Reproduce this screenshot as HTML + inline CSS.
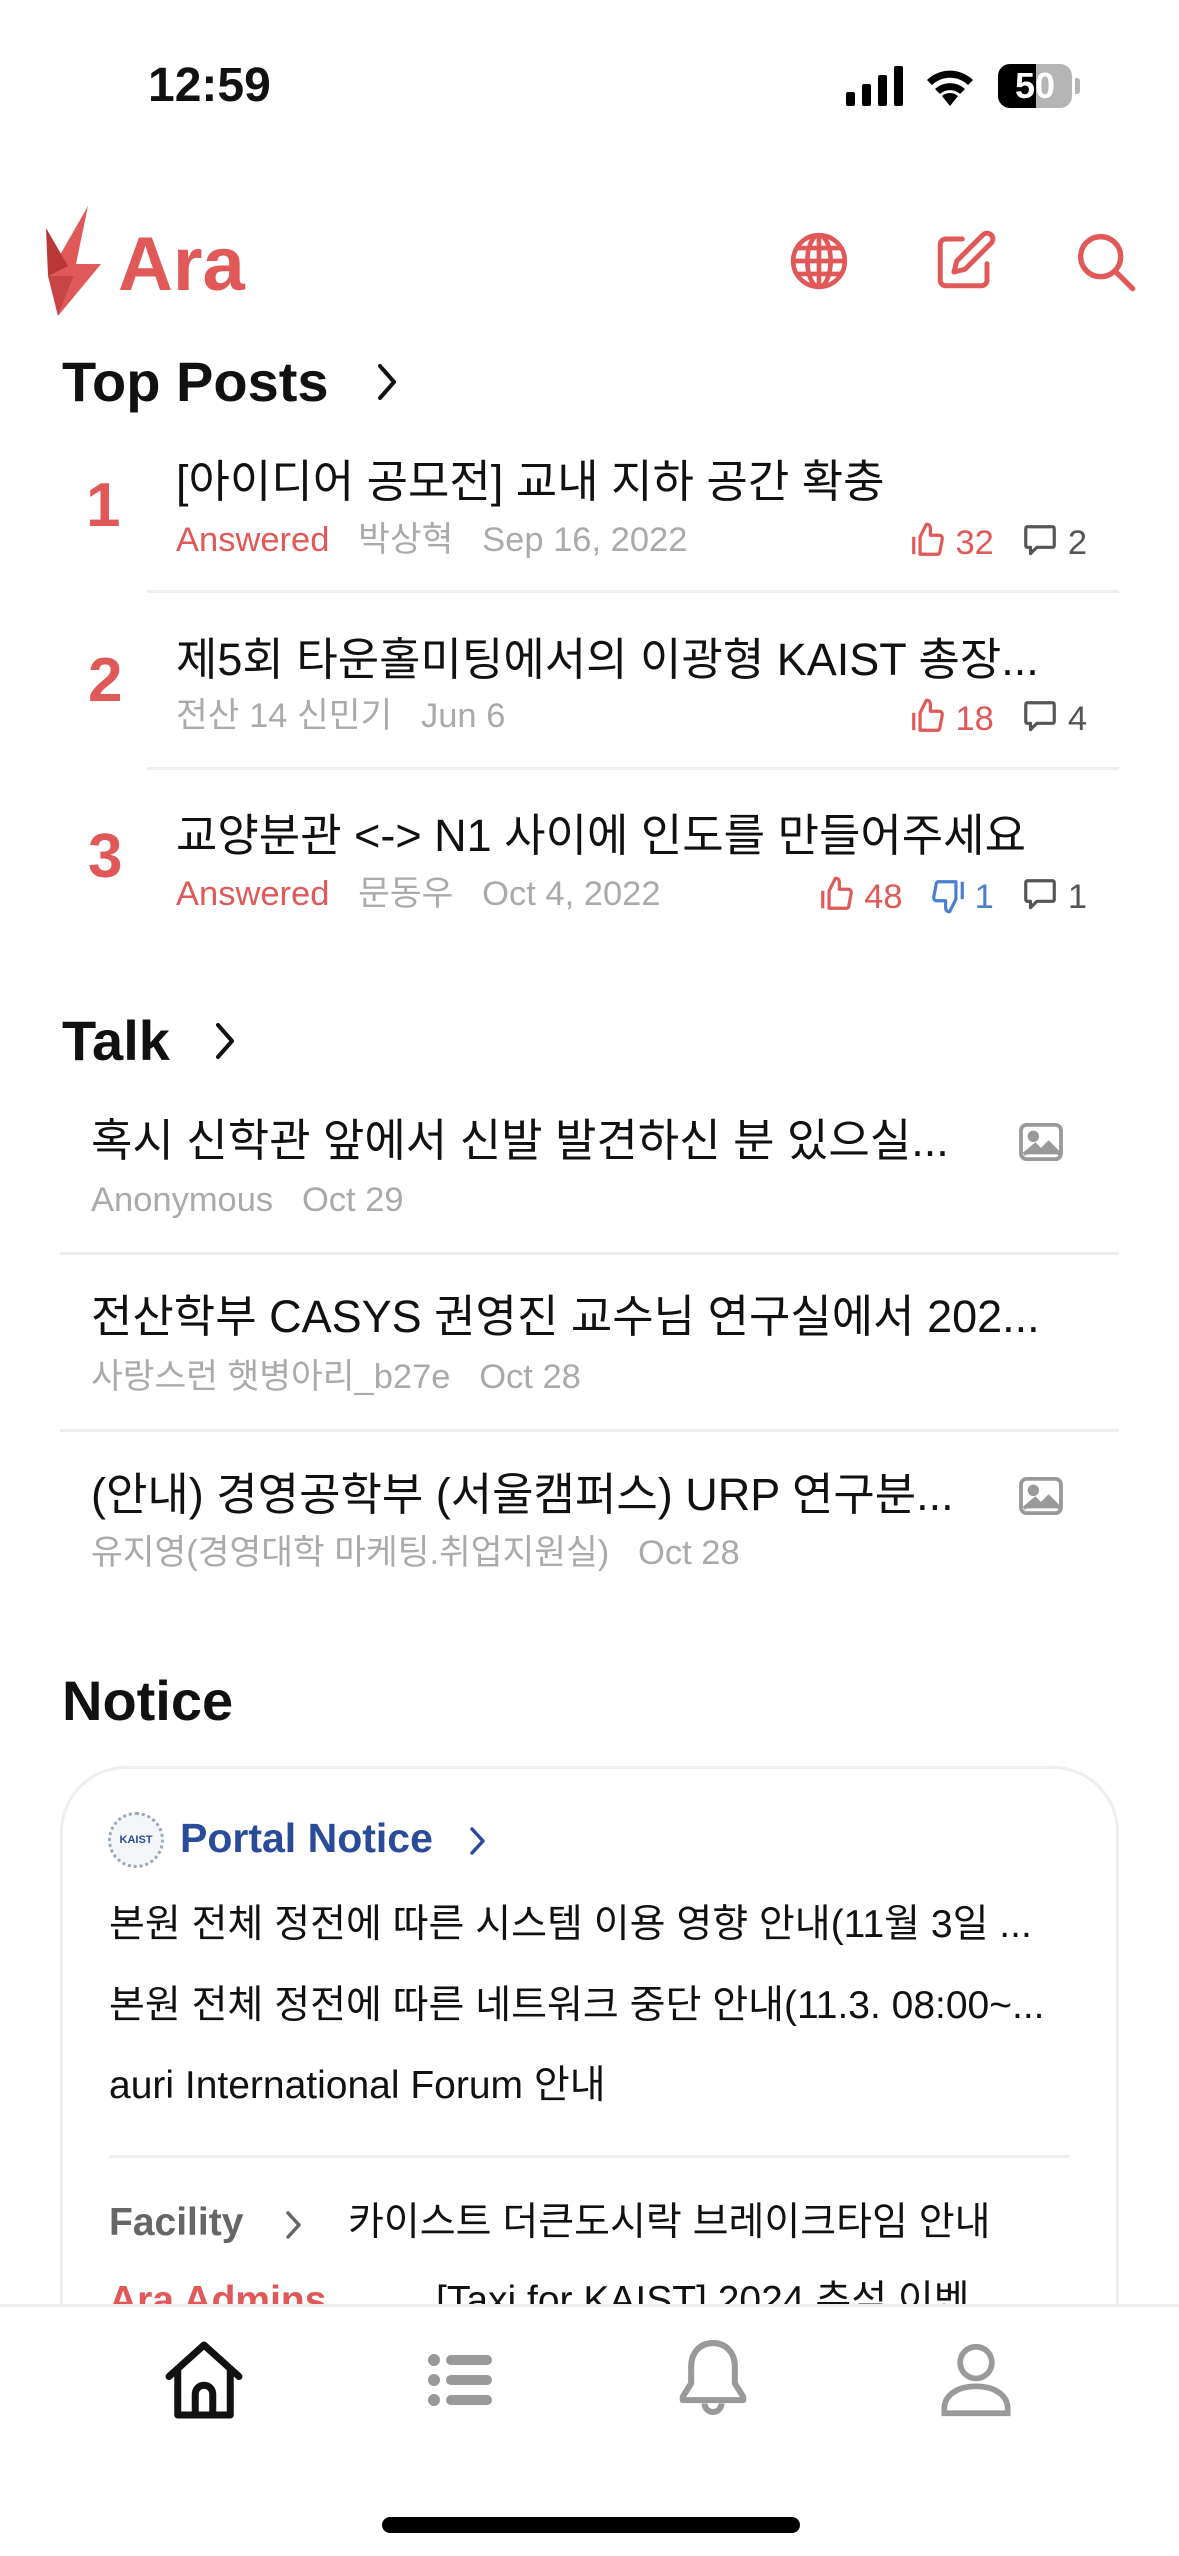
<!DOCTYPE html>
<html><head><meta charset="utf-8"><style>
*{margin:0;padding:0;box-sizing:border-box}
body{width:1179px;height:2556px;background:#fff;position:relative;overflow:hidden;font-family:"Liberation Sans","Noto Sans CJK KR",sans-serif;color:#111}
.a{position:absolute;white-space:nowrap}
.t{font-size:45px;line-height:52px;color:#111}
.m{font-size:34.5px;line-height:40px;color:#aaa}
.r{color:#e15858}
.rank{font-size:62px;font-weight:bold;color:#e15858;line-height:70px}
.h{font-size:56px;font-weight:bold;line-height:64px;color:#111}
.hr{position:absolute;height:3px;background:#eee}
.n{font-size:39px;line-height:46px;color:#111}
svg{position:absolute}
.ic{position:static!important;margin-right:8px}
.g{display:inline-block;width:26px}
</style></head><body>
<!-- status bar -->
<div class="a" style="left:148px;top:58px;font-size:48px;font-weight:bold;line-height:56px">12:59</div>
<svg style="left:846px;top:66px" width="58" height="40"><rect x="0" y="26" width="9" height="14" rx="2"/><rect x="16" y="18" width="9" height="22" rx="2"/><rect x="32" y="9" width="9" height="31" rx="2"/><rect x="48" y="0" width="9" height="40" rx="2"/></svg>
<svg style="left:924px;top:66px" width="52" height="40" viewBox="0 0 52 40"><path d="M26 40 L18 30 A12 12 0 0 1 34 30Z"/><path d="M11 23 A22 22 0 0 1 41 23 L36 28 A15 15 0 0 0 16 28Z"/><path d="M3 14 A33 33 0 0 1 49 14 L44 19 A26 26 0 0 0 8 19Z"/></svg>
<div class="a" style="left:998px;top:64px;width:74px;height:44px;border-radius:12px;background:#b5b5b5;overflow:hidden"><div style="width:38px;height:44px;background:#000"></div></div>
<div class="a" style="left:998px;top:64px;width:74px;height:44px;font-size:36px;font-weight:bold;color:#fff;text-align:center;line-height:44px">50</div>
<div class="a" style="left:1075px;top:78px;width:5px;height:16px;background:#b5b5b5;border-radius:0 3px 3px 0"></div>
<!-- header -->
<svg style="left:46px;top:206px" width="60" height="110" viewBox="0 0 60 110"><path d="M42 0 L30 58 L55 58 L12 110 L28 70 L2 70 Z" fill="#e15858"/><path d="M0 22 L22 60 L2 70 Z" fill="#b83838"/><path d="M2 70 L28 70 L12 110Z" fill="#c94444"/></svg>
<div class="a" style="left:118px;top:222px;font-size:76px;font-weight:bold;color:#e15858;line-height:86px;letter-spacing:0px">Ara</div>
<svg style="left:788px;top:230px" width="62" height="62" viewBox="0 0 24 24" fill="none" stroke="#e15858" stroke-width="1.8"><circle cx="12" cy="12" r="10"/><ellipse cx="12" cy="12" rx="4.5" ry="10"/><path d="M2 12h20M3.5 7h17M3.5 17h17M12 2v20"/></svg>
<svg style="left:932px;top:228px" width="66" height="66" viewBox="0 0 24 24" fill="none" stroke="#e15858" stroke-width="1.8" stroke-linejoin="round" stroke-linecap="round"><path d="M11 4H5a2 2 0 0 0-2 2v13a2 2 0 0 0 2 2h13a2 2 0 0 0 2-2v-6"/><path d="M18.5 2.5a2.1 2.1 0 0 1 3 3L12 15l-4 1 1-4z"/></svg>
<svg style="left:1074px;top:230px" width="64" height="64" viewBox="0 0 24 24" fill="none" stroke="#e15858" stroke-width="2" stroke-linecap="round"><circle cx="10" cy="10" r="7.5"/><path d="M15.5 15.5L22 22"/></svg>
<!-- top posts -->
<div class="a h" style="left:62px;top:350px">Top Posts</div>
<svg style="left:372px;top:360px" width="30" height="44" viewBox="0 0 30 44" fill="none" stroke="#111" stroke-width="4" stroke-linecap="round" stroke-linejoin="round"><path d="M8 6l14 16-14 16"/></svg>

<div class="a rank" style="left:86px;top:471px">1</div>
<div class="a t" style="left:176px;top:456px">[아이디어 공모전] 교내 지하 공간 확충</div>
<div class="a m" style="left:176px;top:520px"><span class="r">Answered</span>&nbsp;&nbsp; 박상혁 &nbsp; Sep 16, 2022</div>
<div class="hr" style="left:147px;top:590px;width:972px"></div>

<div class="a rank" style="left:88px;top:646px">2</div>
<div class="a t" style="left:176px;top:634px">제5회 타운홀미팅에서의 이광형 KAIST 총장...</div>
<div class="a m" style="left:176px;top:696px">전산 14 신민기 &nbsp; Jun 6</div>
<div class="hr" style="left:147px;top:767px;width:972px"></div>

<div class="a rank" style="left:88px;top:822px">3</div>
<div class="a t" style="left:176px;top:810px">교양분관 &lt;-&gt; N1 사이에 인도를 만들어주세요</div>
<div class="a m" style="left:176px;top:874px"><span class="r">Answered</span>&nbsp;&nbsp; 문동우 &nbsp; Oct 4, 2022</div>

<!-- like/comment stats -->
<div class="a m" style="right:92px;top:520px;color:#e15858">
<svg class="ic" style="vertical-align:-6px" width="38" height="40" viewBox="0 0 24 24" fill="none" stroke="#e15858" stroke-width="2" stroke-linejoin="round"><path d="M3 10v11M7 10l4-8c1.5 0 2.5 1 2.5 2.5V9h5.5a2 2 0 0 1 2 2.3l-1.5 8A2 2 0 0 1 18.5 21H7z"/></svg>32<span class="g"></span><span style="color:#555"><svg class="ic" style="vertical-align:-6px" width="40" height="38" viewBox="0 0 24 24" fill="none" stroke="#555" stroke-width="2" stroke-linejoin="round"><path d="M4 3h16a1 1 0 0 1 1 1v11a1 1 0 0 1-1 1H10l-4 4v-4H4a1 1 0 0 1-1-1V4a1 1 0 0 1 1-1z"/></svg>2</span></div>
<div class="a m" style="right:92px;top:696px;color:#e15858">
<svg class="ic" style="vertical-align:-6px" width="38" height="40" viewBox="0 0 24 24" fill="none" stroke="#e15858" stroke-width="2" stroke-linejoin="round"><path d="M3 10v11M7 10l4-8c1.5 0 2.5 1 2.5 2.5V9h5.5a2 2 0 0 1 2 2.3l-1.5 8A2 2 0 0 1 18.5 21H7z"/></svg>18<span class="g"></span><span style="color:#555"><svg class="ic" style="vertical-align:-6px" width="40" height="38" viewBox="0 0 24 24" fill="none" stroke="#555" stroke-width="2" stroke-linejoin="round"><path d="M4 3h16a1 1 0 0 1 1 1v11a1 1 0 0 1-1 1H10l-4 4v-4H4a1 1 0 0 1-1-1V4a1 1 0 0 1 1-1z"/></svg>4</span></div>
<div class="a m" style="right:92px;top:874px;color:#e15858">
<svg class="ic" style="vertical-align:-6px" width="38" height="40" viewBox="0 0 24 24" fill="none" stroke="#e15858" stroke-width="2" stroke-linejoin="round"><path d="M3 10v11M7 10l4-8c1.5 0 2.5 1 2.5 2.5V9h5.5a2 2 0 0 1 2 2.3l-1.5 8A2 2 0 0 1 18.5 21H7z"/></svg>48<span class="g"></span><span style="color:#4a7fd0"><svg class="ic" style="vertical-align:-8px" width="38" height="40" viewBox="0 0 24 24" fill="none" stroke="#4a7fd0" stroke-width="2" stroke-linejoin="round"><path d="M21 14V3M17 14l-4 8c-1.5 0-2.5-1-2.5-2.5V15H5a2 2 0 0 1-2-2.3l1.5-8A2 2 0 0 1 5.5 3H17z"/></svg>1</span><span class="g"></span><span style="color:#555"><svg class="ic" style="vertical-align:-6px" width="40" height="38" viewBox="0 0 24 24" fill="none" stroke="#555" stroke-width="2" stroke-linejoin="round"><path d="M4 3h16a1 1 0 0 1 1 1v11a1 1 0 0 1-1 1H10l-4 4v-4H4a1 1 0 0 1-1-1V4a1 1 0 0 1 1-1z"/></svg>1</span></div>

<!-- talk -->
<div class="a h" style="left:62px;top:1009px">Talk</div>
<svg style="left:210px;top:1019px" width="30" height="44" viewBox="0 0 30 44" fill="none" stroke="#111" stroke-width="4" stroke-linecap="round" stroke-linejoin="round"><path d="M8 6l14 16-14 16"/></svg>

<div class="a t" style="left:91px;top:1115px">혹시 신학관 앞에서 신발 발견하신 분 있으실...</div>
<div class="a m" style="left:91px;top:1180px">Anonymous &nbsp; Oct 29</div>
<div class="hr" style="left:60px;top:1252px;width:1059px"></div>
<div class="a t" style="left:91px;top:1291px">전산학부 CASYS 권영진 교수님 연구실에서 202...</div>
<div class="a m" style="left:91px;top:1357px">사랑스런 햇병아리_b27e &nbsp; Oct 28</div>
<div class="hr" style="left:60px;top:1429px;width:1059px"></div>
<div class="a t" style="left:91px;top:1469px">(안내) 경영공학부 (서울캠퍼스) URP 연구분...</div>
<div class="a m" style="left:91px;top:1533px">유지영(경영대학 마케팅.취업지원실) &nbsp; Oct 28</div>
<svg style="left:1018px;top:1122px" width="46" height="40" viewBox="0 0 24 21" fill="none" stroke="#999" stroke-width="2"><rect x="1.5" y="1.5" width="21" height="18" rx="3"/><circle cx="8" cy="7.5" r="2" fill="#999"/><path d="M3 17l6-5 3 3 4-4 6 6" fill="#999"/></svg>
<svg style="left:1018px;top:1476px" width="46" height="40" viewBox="0 0 24 21" fill="none" stroke="#999" stroke-width="2"><rect x="1.5" y="1.5" width="21" height="18" rx="3"/><circle cx="8" cy="7.5" r="2" fill="#999"/><path d="M3 17l6-5 3 3 4-4 6 6" fill="#999"/></svg>

<!-- notice -->
<div class="a h" style="left:62px;top:1669px">Notice</div>
<div class="a" style="left:60px;top:1766px;width:1059px;height:700px;border:3px solid #eee;border-radius:66px"></div>
<div class="a" style="left:108px;top:1812px;width:56px;height:56px;border-radius:50%;border:3px dotted #9ab;background:#f4f6fa;font-size:11px;color:#2a4a9a;text-align:center;line-height:50px;font-weight:bold">KAIST</div>
<div class="a" style="left:180px;top:1813px;font-size:41px;font-weight:bold;color:#2a4a9a;line-height:50px">Portal Notice</div>
<svg style="left:466px;top:1824px" width="24" height="34" viewBox="0 0 24 34" fill="none" stroke="#2a4a9a" stroke-width="3.5" stroke-linecap="round" stroke-linejoin="round"><path d="M6 5l11 12-11 12"/></svg>
<div class="a n" style="left:109px;top:1902px">본원 전체 정전에 따른 시스템 이용 영향 안내(11월 3일 ...</div>
<div class="a n" style="left:109px;top:1983px">본원 전체 정전에 따른 네트워크 중단 안내(11.3. 08:00~...</div>
<div class="a n" style="left:109px;top:2063px">auri International Forum 안내</div>
<div class="hr" style="left:109px;top:2155px;width:961px"></div>
<div class="a" style="left:109px;top:2200px;font-size:39px;font-weight:bold;color:#666;line-height:46px">Facility</div>
<svg style="left:282px;top:2208px" width="24" height="34" viewBox="0 0 24 34" fill="none" stroke="#666" stroke-width="3.5" stroke-linecap="round" stroke-linejoin="round"><path d="M6 5l11 12-11 12"/></svg>
<div class="a n" style="left:348px;top:2200px">카이스트 더큰도시락 브레이크타임 안내</div>
<div class="a" style="left:109px;top:2278px;font-size:39px;font-weight:bold;color:#e15858;line-height:46px">Ara Admins</div>
<div class="a n" style="left:436px;top:2278px">[Taxi for KAIST] 2024 추석 이벤</div>

<!-- tab bar -->
<div class="a" style="left:0;top:2304px;width:1179px;height:252px;background:#fff;border-top:3px solid #eee"></div>
<svg style="left:162px;top:2338px" width="84" height="84" viewBox="0 0 24 24" fill="none" stroke="#111" stroke-width="2" stroke-linejoin="round" stroke-linecap="round"><path d="M2 11L12 2l10 9"/><path d="M4.5 9v13h15V9"/><path d="M9.5 22v-6a2.5 2.5 0 0 1 5 0v6"/></svg>
<svg style="left:428px;top:2352px" width="64" height="56" viewBox="0 0 32 28" fill="#999"><circle cx="3" cy="4" r="3"/><circle cx="3" cy="14" r="3"/><circle cx="3" cy="24" r="3"/><rect x="9" y="1.5" width="23" height="5" rx="2.5"/><rect x="9" y="11.5" width="23" height="5" rx="2.5"/><rect x="9" y="21.5" width="23" height="5" rx="2.5"/></svg>
<svg style="left:676px;top:2338px" width="74" height="84" viewBox="0 0 22 25" fill="none" stroke="#999" stroke-width="1.8" stroke-linejoin="round"><path d="M11 1.5c-4 0-6.5 3-6.5 7v5L2 17.5v1h18v-1l-2.5-4v-5c0-4-2.5-7-6.5-7z"/><path d="M8.5 19.5a2.5 2.5 0 0 0 5 0"/></svg>
<svg style="left:938px;top:2340px" width="76" height="80" viewBox="0 0 24 25" fill="none" stroke="#999" stroke-width="1.8"><circle cx="12" cy="7" r="5"/><path d="M2 23v-1.5C2 17 6.5 14.5 12 14.5S22 17 22 21.5V23z"/></svg>
<div class="a" style="left:382px;top:2517px;width:418px;height:16px;border-radius:8px;background:#000"></div>
</body></html>
